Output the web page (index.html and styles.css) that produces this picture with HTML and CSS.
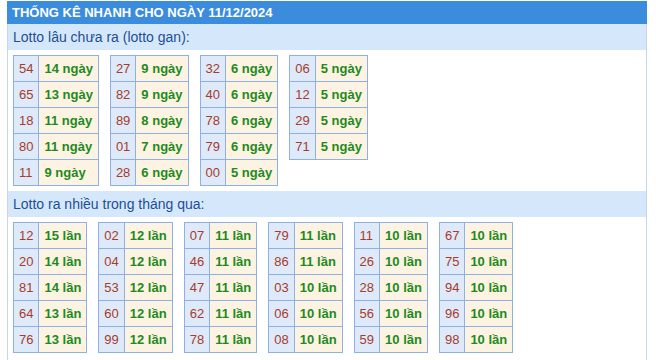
FILE: index.html
```html
<!DOCTYPE html>
<html lang="vi">
<head>
  <meta charset="UTF-8">
  <meta name="viewport" content="width=device-width, initial-scale=1.0">
  <title>Thống kê nhanh</title>
  <link rel="stylesheet" href="styles.css">
</head>
<body>

<div class="stats-box">
  <div class="stats-title">THỐNG KÊ NHANH CHO NGÀY 11/12/2024</div>
  <div class="stats-body">

    <div class="sub-title">Lotto lâu chưa ra (lotto gan):</div>
    <div class="lotto-list">
      <table class="lotto-table">
        <tr><td class="num">54</td><td class="count">14 ngày</td></tr>
        <tr><td class="num">65</td><td class="count">13 ngày</td></tr>
        <tr><td class="num">18</td><td class="count">11 ngày</td></tr>
        <tr><td class="num">80</td><td class="count">11 ngày</td></tr>
        <tr><td class="num">11</td><td class="count">9 ngày</td></tr>
      </table>
      <table class="lotto-table">
        <tr><td class="num">27</td><td class="count">9 ngày</td></tr>
        <tr><td class="num">82</td><td class="count">9 ngày</td></tr>
        <tr><td class="num">89</td><td class="count">8 ngày</td></tr>
        <tr><td class="num">01</td><td class="count">7 ngày</td></tr>
        <tr><td class="num">28</td><td class="count">6 ngày</td></tr>
      </table>
      <table class="lotto-table">
        <tr><td class="num">32</td><td class="count">6 ngày</td></tr>
        <tr><td class="num">40</td><td class="count">6 ngày</td></tr>
        <tr><td class="num">78</td><td class="count">6 ngày</td></tr>
        <tr><td class="num">79</td><td class="count">6 ngày</td></tr>
        <tr><td class="num">00</td><td class="count">5 ngày</td></tr>
      </table>
      <table class="lotto-table">
        <tr><td class="num">06</td><td class="count">5 ngày</td></tr>
        <tr><td class="num">12</td><td class="count">5 ngày</td></tr>
        <tr><td class="num">29</td><td class="count">5 ngày</td></tr>
        <tr><td class="num">71</td><td class="count">5 ngày</td></tr>
      </table>
    </div>

    <div class="sub-title">Lotto ra nhiều trong tháng qua:</div>
    <div class="lotto-list">
      <table class="lotto-table">
        <tr><td class="num">12</td><td class="count">15 lần</td></tr>
        <tr><td class="num">20</td><td class="count">14 lần</td></tr>
        <tr><td class="num">81</td><td class="count">14 lần</td></tr>
        <tr><td class="num">64</td><td class="count">13 lần</td></tr>
        <tr><td class="num">76</td><td class="count">13 lần</td></tr>
      </table>
      <table class="lotto-table">
        <tr><td class="num">02</td><td class="count">12 lần</td></tr>
        <tr><td class="num">04</td><td class="count">12 lần</td></tr>
        <tr><td class="num">53</td><td class="count">12 lần</td></tr>
        <tr><td class="num">60</td><td class="count">12 lần</td></tr>
        <tr><td class="num">99</td><td class="count">12 lần</td></tr>
      </table>
      <table class="lotto-table">
        <tr><td class="num">07</td><td class="count">11 lần</td></tr>
        <tr><td class="num">46</td><td class="count">11 lần</td></tr>
        <tr><td class="num">47</td><td class="count">11 lần</td></tr>
        <tr><td class="num">62</td><td class="count">11 lần</td></tr>
        <tr><td class="num">78</td><td class="count">11 lần</td></tr>
      </table>
      <table class="lotto-table">
        <tr><td class="num">79</td><td class="count">11 lần</td></tr>
        <tr><td class="num">86</td><td class="count">11 lần</td></tr>
        <tr><td class="num">03</td><td class="count">10 lần</td></tr>
        <tr><td class="num">06</td><td class="count">10 lần</td></tr>
        <tr><td class="num">08</td><td class="count">10 lần</td></tr>
      </table>
      <table class="lotto-table">
        <tr><td class="num">11</td><td class="count">10 lần</td></tr>
        <tr><td class="num">26</td><td class="count">10 lần</td></tr>
        <tr><td class="num">28</td><td class="count">10 lần</td></tr>
        <tr><td class="num">56</td><td class="count">10 lần</td></tr>
        <tr><td class="num">59</td><td class="count">10 lần</td></tr>
      </table>
      <table class="lotto-table">
        <tr><td class="num">67</td><td class="count">10 lần</td></tr>
        <tr><td class="num">75</td><td class="count">10 lần</td></tr>
        <tr><td class="num">94</td><td class="count">10 lần</td></tr>
        <tr><td class="num">96</td><td class="count">10 lần</td></tr>
        <tr><td class="num">98</td><td class="count">10 lần</td></tr>
      </table>
    </div>

  </div>
</div>

</body>
</html>
```

FILE: styles.css
```css
body {
  margin: 0;
  padding: 0;
  font-family: "Liberation Sans", Arial, sans-serif;
  background-color: white;
}

.stats-box {
  width: 640px;
  margin: 1px 0 0 7px;
}

.stats-title {
  background-color: #3b8cdd;
  color: white;
  font-size: 13px;
  font-weight: bold;
  height: 23px;
  line-height: 23px;
  padding-left: 5px;
}

.stats-body {
  border-left: 1px solid #c6d6ea;
  border-right: 1px solid #c6d6ea;
  min-height: 336px;
}

.sub-title {
  background-color: #d5e8fb;
  color: #1f4f92;
  font-size: 14px;
  height: 26px;
  line-height: 26px;
  padding-left: 5px;
}

.lotto-list {
  display: flex;
  align-items: flex-start;
  gap: 11px;
  padding: 5px 0 5px 5px;
}

.lotto-table {
  border-collapse: collapse;
  font-size: 13px;
}

.lotto-table td {
  border: 1px solid #8fb0e2;
  height: 25px;
  padding: 0 5px;
  white-space: nowrap;
}

.lotto-table .num {
  background-color: #dee9fa;
  color: #a63c2a;
}

.lotto-table .count {
  background-color: #fdf3e2;
  color: #1e8a1e;
  font-weight: bold;
}
```
